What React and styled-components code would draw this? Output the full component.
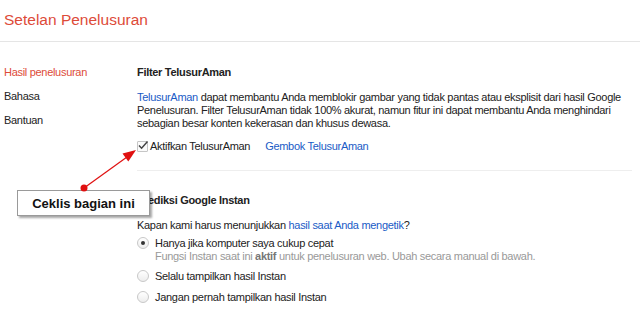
import React from "react";
import styled, { createGlobalStyle } from "styled-components";

const GlobalStyle = createGlobalStyle`
  html, body {
    margin: 0;
    padding: 0;
    background: #ffffff;
  }
  body {
    font-family: Arial, "Liberation Sans", sans-serif;
    color: #222222;
  }
`;

const Page = styled.div`
  position: relative;
  width: 640px;
  height: 312px;
  overflow: hidden;
  background: #ffffff;
`;

const Header = styled.div`
  padding: 10px 4px 11px;
  border-bottom: 1px solid #e5e5e5;
`;

const Title = styled.div`
  font-size: 15.5px;
  line-height: 20px;
  color: #dd4b39;
`;

const Body = styled.div`
  display: flex;
  padding-top: 18px;
  font-size: 11px;
  letter-spacing: -0.3px;
`;

const Nav = styled.div`
  width: 133px;
  padding-left: 4px;
  display: flex;
  flex-direction: column;
`;

const NavItem = styled.div`
  line-height: 24px;
  color: ${(p) => (p.$active ? "#dd4b39" : "#222222")};
`;

const Main = styled.div`
  flex: 1;
  padding-right: 8px;
`;

const SectionTitle = styled.div`
  font-weight: bold;
  line-height: 24px;
  color: #222222;
`;

const Paragraph = styled.p`
  margin: 7px 0 0;
  width: 495px;
  line-height: 13px;
  color: #222222;
`;

const Link = styled.span`
  color: #1a5bc6;
`;

const CheckRow = styled.div`
  display: flex;
  align-items: center;
  gap: 15px;
  margin-top: 8px;
  height: 16px;
`;

const CheckLabel = styled.label`
  display: flex;
  align-items: center;
  gap: 2px;
  color: #222222;
`;

const CheckBox = styled.span`
  width: 9px;
  height: 9px;
  border: 1px solid #c6c6c6;
  border-radius: 1px;
  background: #fbfbfb;
  position: relative;
  display: inline-block;

  svg {
    position: absolute;
    left: -1px;
    top: -3px;
  }
`;

const Divider = styled.div`
  height: 1px;
  background: #eeeeee;
  margin-top: 16px;
`;

const SectionTwo = styled.div`
  margin-top: 17px;
`;

const Question = styled.div`
  margin-top: 6px;
  line-height: 14px;
  color: #222222;
`;

const Options = styled.div`
  display: flex;
  flex-direction: column;
  gap: 7px;
  margin-top: 4px;
`;

const Option = styled.div`
  display: flex;
  flex-direction: column;
`;

const OptionRow = styled.div`
  display: flex;
  align-items: center;
  gap: 6px;
  line-height: 14px;
  color: #222222;
`;

const Radio = styled.span`
  width: 10px;
  height: 10px;
  border-radius: 50%;
  border: 1px solid #c8c8c8;
  background: linear-gradient(#ffffff, #ededed);
  position: relative;
  flex-shrink: 0;

  &::after {
    content: "";
    display: ${(p) => (p.$checked ? "block" : "none")};
    position: absolute;
    left: 3px;
    top: 3px;
    width: 4px;
    height: 4px;
    border-radius: 50%;
    background: #333333;
  }
`;

const Hint = styled.div`
  padding-left: 18px;
  line-height: 12px;
  color: #999999;

  b {
    color: #777777;
  }
`;

const Callout = styled.div`
  position: absolute;
  left: 17px;
  top: 190px;
  width: 131px;
  height: 24px;
  border: 1px solid #9a9a9a;
  background: #ffffff;
  box-shadow: 2px 2px 2px rgba(0, 0, 0, 0.35);
  display: flex;
  align-items: center;
  justify-content: center;
  font-size: 13px;
  font-weight: bold;
  color: #111111;
`;

const Pointer = styled.svg`
  position: absolute;
  left: 0;
  top: 0;
  pointer-events: none;
`;

const App = () => {
  return (
    <Page>
      <GlobalStyle />
      <Header>
        <Title>Setelan Penelusuran</Title>
      </Header>
      <Body>
        <Nav>
          <NavItem $active>Hasil penelusuran</NavItem>
          <NavItem>Bahasa</NavItem>
          <NavItem>Bantuan</NavItem>
        </Nav>
        <Main>
          <SectionTitle>Filter TelusurAman</SectionTitle>
          <Paragraph>
            <Link>TelusurAman</Link> dapat membantu Anda memblokir gambar yang
            tidak pantas atau eksplisit dari hasil Google Penelusuran. Filter
            TelusurAman tidak 100% akurat, namun fitur ini dapat membantu Anda
            menghindari sebagian besar konten kekerasan dan khusus dewasa.
          </Paragraph>
          <CheckRow>
            <CheckLabel>
              <CheckBox>
                <svg width="12" height="12" viewBox="0 0 12 12">
                  <path
                    d="M2 6.5 L4.6 9.2 L10.5 2.5"
                    fill="none"
                    stroke="#444"
                    strokeWidth="1.5"
                  />
                </svg>
              </CheckBox>
              Aktifkan TelusurAman
            </CheckLabel>
            <Link>Gembok TelusurAman</Link>
          </CheckRow>
          <Divider />
          <SectionTwo>
            <SectionTitle>Prediksi Google Instan</SectionTitle>
            <Question>
              Kapan kami harus menunjukkan{" "}
              <Link>hasil saat Anda mengetik</Link>?
            </Question>
            <Options>
              <Option>
                <OptionRow>
                  <Radio $checked />
                  Hanya jika komputer saya cukup cepat
                </OptionRow>
                <Hint>
                  Fungsi Instan saat ini <b>aktif</b> untuk penelusuran web.
                  Ubah secara manual di bawah.
                </Hint>
              </Option>
              <Option>
                <OptionRow>
                  <Radio />
                  Selalu tampilkan hasil Instan
                </OptionRow>
              </Option>
              <Option>
                <OptionRow>
                  <Radio />
                  Jangan pernah tampilkan hasil Instan
                </OptionRow>
              </Option>
            </Options>
          </SectionTwo>
        </Main>
      </Body>
      <Callout>Ceklis bagian ini</Callout>
      <Pointer width="640" height="312" viewBox="0 0 640 312">
        <line x1="84" y1="188" x2="127" y2="157" stroke="#e01010" strokeWidth="1.2" />
        <polygon points="136,150 128.3,161.6 122.5,153.4" fill="#e01010" />
        <circle cx="84" cy="188" r="3.5" fill="#e01010" />
      </Pointer>
    </Page>
  );
};

export default App;
